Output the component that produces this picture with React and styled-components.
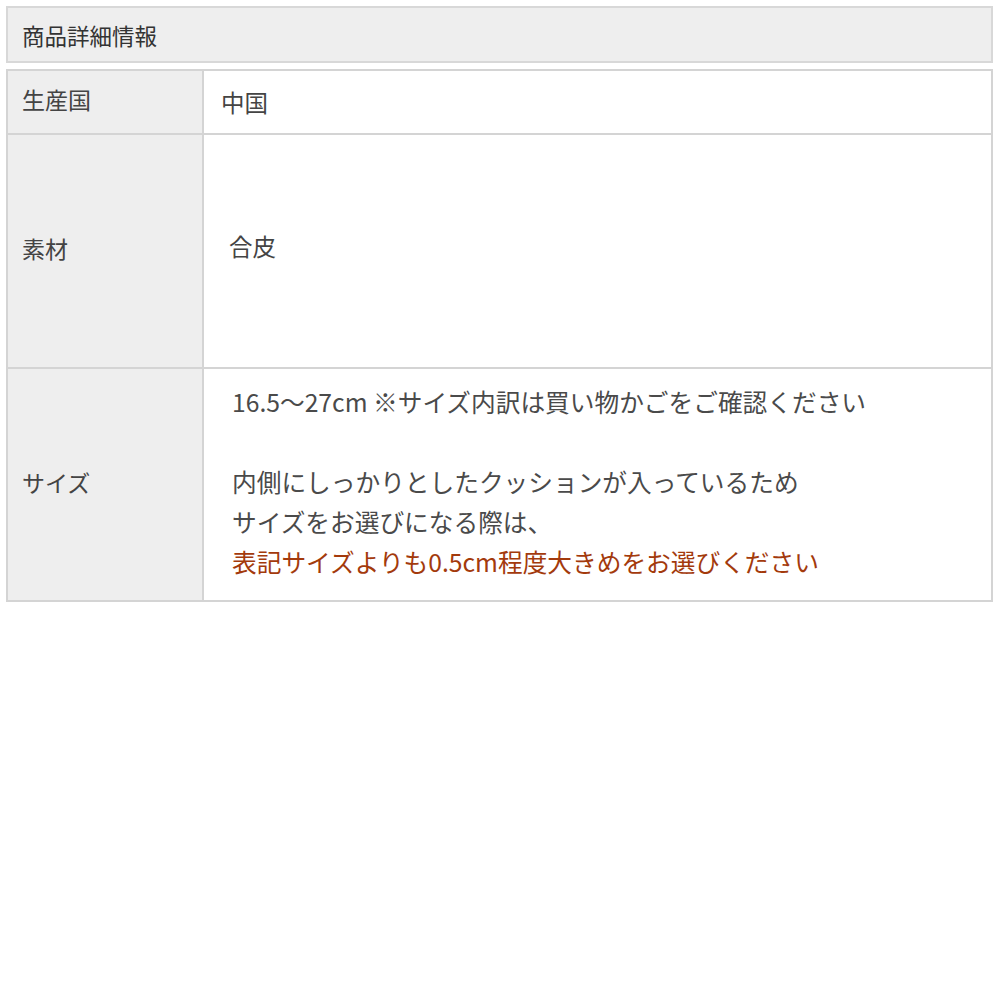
import React from "react";
import styled, { createGlobalStyle } from "styled-components";

const Global = createGlobalStyle`
  body {
    margin: 0;
    background: #fff;
    font-family: "Noto Sans CJK JP", "Noto Sans", sans-serif;
  }
`;

const Page = styled.div`
  padding: 6px 7px 6px 6px;
`;

const Header = styled.div`
  height: 53px;
  display: flex;
  align-items: center;
  padding: 0 14px;
  background: #eeeeee;
  border: 2px solid #d8d8d8;
  color: #333;
  font-size: 22.5px;
`;

const Table = styled.table`
  width: 100%;
  margin-top: 6px;
  border-collapse: collapse;
  border: 2px solid #d4d4d4;
  table-layout: fixed;
`;

const Label = styled.th`
  width: 166px;
  background: #eeeeee;
  border: 2px solid #d4d4d4;
  text-align: left;
  font-weight: normal;
  padding: 0 14px 6px;
  color: #444;
  font-size: 23px;
  height: ${({ $h }) => $h}px;
`;

const Value = styled.td`
  background: #fff;
  border: 2px solid #d4d4d4;
  padding: ${({ $pad }) => $pad || "0 17px"};
  color: #444;
  font-size: 23.5px;
  vertical-align: middle;
`;

const Lines = styled.div`
  font-size: 24.7px;
  line-height: 40px;
  color: #4a4a4a;
`;

const Line = styled.div`
  min-height: 40px;
  color: ${({ $red }) => ($red ? "#a33a0c" : "inherit")};
`;

export default function App() {
  return (
    <>
      <Global />
      <Page>
        <Header>商品詳細情報</Header>
        <Table>
          <tbody>
            <tr>
              <Label $h={56}>生産国</Label>
              <Value>中国</Value>
            </tr>
            <tr>
              <Label $h={226}>素材</Label>
              <Value $pad="0 25px 10px">合皮</Value>
            </tr>
            <tr>
              <Label $h={225}>サイズ</Label>
              <Value $pad="0 28px 8px">
                <Lines>
                  <Line>16.5～27cm ※サイズ内訳は買い物かごをご確認ください</Line>
                  <Line />
                  <Line>内側にしっかりとしたクッションが入っているため</Line>
                  <Line>サイズをお選びになる際は、</Line>
                  <Line $red>表記サイズよりも0.5cm程度大きめをお選びください</Line>
                </Lines>
              </Value>
            </tr>
          </tbody>
        </Table>
      </Page>
    </>
  );
}
